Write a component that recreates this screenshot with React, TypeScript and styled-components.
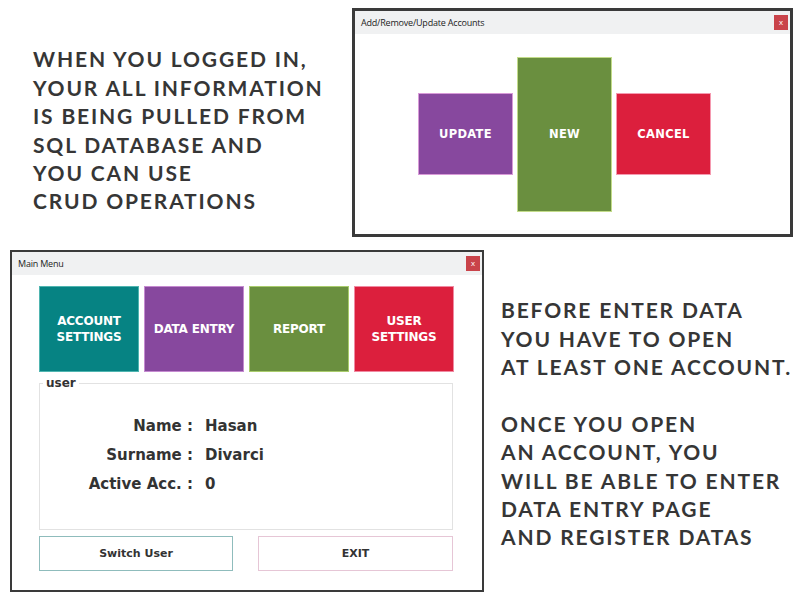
import * as React from 'react'
import styled, { createGlobalStyle } from 'styled-components'

const GlobalStyle = createGlobalStyle`
  html, body {
    margin: 0;
    padding: 0;
    background: #ffffff;
  }
  body {
    font-family: 'Liberation Sans', Arial, sans-serif;
  }
`

const tileFont = `'DejaVu Sans', Verdana, sans-serif`

const App: React.FC = () => {
  return (
    <Page>
      <GlobalStyle />
      <TopRow>
        <Blurb $shift={16}>
          WHEN YOU LOGGED IN,
          <br />
          YOUR ALL INFORMATION
          <br />
          IS BEING PULLED FROM
          <br />
          SQL DATABASE AND
          <br />
          YOU CAN USE
          <br />
          CRUD OPERATIONS
        </Blurb>
        <Window $w={441} $h={229} $border={3}>
          <TitleBar>
            <Title>Add/Remove/Update Accounts</Title>
            <CloseBtn>x</CloseBtn>
          </TitleBar>
          <AccountBody>
            <BigTile $bg="#87489e" $edge="#d89ad8" $h={82}>
              UPDATE
            </BigTile>
            <BigTile $bg="#6a8f3f" $edge="#c3dc8a" $h={155}>
              NEW
            </BigTile>
            <BigTile $bg="#dc1f3d" $edge="#f59ab0" $h={82}>
              CANCEL
            </BigTile>
          </AccountBody>
        </Window>
      </TopRow>
      <BottomRow>
        <Window $w={474} $h={342} $border={2}>
          <TitleBar>
            <Title>Main Menu</Title>
            <CloseBtn>x</CloseBtn>
          </TitleBar>
          <MenuBody>
            <TileRow>
              <MenuTile $bg="#068383" $edge="#4fb5b0">
                ACCOUNT
                <br />
                SETTINGS
              </MenuTile>
              <MenuTile $bg="#87489e" $edge="#c58ad0">DATA ENTRY</MenuTile>
              <MenuTile $bg="#6a8f3f" $edge="#a9cc6c">REPORT</MenuTile>
              <MenuTile $bg="#dc1f3d" $edge="#f08aa2">
                USER
                <br />
                SETTINGS
              </MenuTile>
            </TileRow>
            <UserBox>
              <legend>user</legend>
              <InfoGrid>
                <Label>Name :</Label>
                <Value>Hasan</Value>
                <Label>Surname :</Label>
                <Value>Divarci</Value>
                <Label>Active Acc. :</Label>
                <Value>0</Value>
              </InfoGrid>
            </UserBox>
            <ActionRow>
              <ActionButton $edge="#8fbcbc">Switch User</ActionButton>
              <ActionButton $edge="#e6c6d6">EXIT</ActionButton>
            </ActionRow>
          </MenuBody>
        </Window>
        <Blurb $shift={6}>
          BEFORE ENTER DATA
          <br />
          YOU HAVE TO OPEN
          <br />
          AT LEAST ONE ACCOUNT.
          <br />
          <br />
          ONCE YOU OPEN
          <br />
          AN ACCOUNT, YOU
          <br />
          WILL BE ABLE TO ENTER
          <br />
          DATA ENTRY PAGE
          <br />
          AND REGISTER DATAS
        </Blurb>
      </BottomRow>
    </Page>
  )
}

const Page = styled.div`
  width: 800px;
  height: 600px;
  overflow: hidden;
  display: flex;
  flex-direction: column;
`

const TopRow = styled.div`
  display: flex;
  align-items: center;
  justify-content: space-between;
  padding: 8px 7px 0 33px;
`

const BottomRow = styled.div`
  display: flex;
  align-items: center;
  gap: 17px;
  padding: 13px 0 0 10px;
`

const Blurb = styled.div<{ $shift: number }>`
  margin-top: ${(p) => p.$shift}px;
  font-family: 'Lato', 'Liberation Sans', sans-serif;
  font-weight: 700;
  font-size: 21px;
  line-height: 28.4px;
  letter-spacing: 1.85px;
  color: #363636;
  white-space: nowrap;
`

const Window = styled.div<{ $w: number; $h: number; $border: number }>`
  box-sizing: border-box;
  width: ${(p) => p.$w}px;
  height: ${(p) => p.$h}px;
  border: ${(p) => p.$border}px solid #3a3a3a;
  background: #ffffff;
  display: flex;
  flex-direction: column;
`

const TitleBar = styled.div`
  height: 23px;
  flex: none;
  background: #f0f1f2;
  display: flex;
  align-items: center;
  justify-content: space-between;
  padding: 0 2px 0 6px;
`

const Title = styled.span`
  font-family: 'Open Sans', 'Liberation Sans', sans-serif;
  font-size: 9px;
  letter-spacing: -0.2px;
  color: #222;
`

const CloseBtn = styled.span`
  width: 14px;
  height: 15px;
  background: #c9434a;
  color: #fff;
  font-family: 'Liberation Sans', sans-serif;
  font-size: 8px;
  display: flex;
  align-items: center;
  justify-content: center;
`

const AccountBody = styled.div`
  flex: 1;
  display: flex;
  align-items: center;
  gap: 4px;
  padding: 0 0 0 63px;
`

const BigTile = styled.div<{ $bg: string; $edge: string; $h: number }>`
  box-sizing: border-box;
  width: 95px;
  height: ${(p) => p.$h}px;
  background: ${(p) => p.$bg};
  border: 1.5px solid ${(p) => p.$edge};
  color: #fff;
  font-family: ${tileFont};
  font-weight: 700;
  font-size: 11.5px;
  letter-spacing: 0.3px;
  display: flex;
  align-items: center;
  justify-content: center;
`

const MenuBody = styled.div`
  flex: 1;
  display: flex;
  flex-direction: column;
  padding: 11px 29px 0 27px;
`

const TileRow = styled.div`
  display: grid;
  grid-template-columns: repeat(4, 100px);
  gap: 5px;
`

const MenuTile = styled.div<{ $bg: string; $edge: string }>`
  box-sizing: border-box;
  height: 86px;
  background: ${(p) => p.$bg};
  border: 1.5px solid ${(p) => p.$edge};
  color: #fff;
  font-family: ${tileFont};
  font-weight: 700;
  font-size: 12px;
  line-height: 16.5px;
  letter-spacing: -0.2px;
  text-align: center;
  display: flex;
  align-items: center;
  justify-content: center;
`

const UserBox = styled.fieldset`
  box-sizing: border-box;
  margin: 4px 0 0 0;
  padding: 0;
  height: 154px;
  border: 1px solid #e2e2e2;
  border-radius: 0;

  legend {
    margin-left: 3px;
    padding: 0 3px;
    font-family: ${tileFont};
    font-weight: 700;
    font-size: 12px;
    color: #333;
    line-height: 14px;
  }
`

const InfoGrid = styled.div`
  display: grid;
  grid-template-columns: 153px auto;
  column-gap: 12px;
  row-gap: 8px;
  padding-top: 26px;
  align-items: center;
`

const Label = styled.span`
  text-align: right;
  font-family: ${tileFont};
  font-weight: 700;
  font-size: 15px;
  line-height: 21px;
  color: #333;
`

const Value = styled.span`
  font-family: ${tileFont};
  font-weight: 700;
  font-size: 15px;
  line-height: 21px;
  color: #333;
`

const ActionRow = styled.div`
  display: grid;
  grid-template-columns: 194px 195px;
  justify-content: space-between;
  margin-top: 6px;
`

const ActionButton = styled.div<{ $edge: string }>`
  box-sizing: border-box;
  height: 35px;
  border: 1.5px solid ${(p) => p.$edge};
  background: #fff;
  font-family: ${tileFont};
  font-weight: 700;
  font-size: 11px;
  color: #333;
  display: flex;
  align-items: center;
  justify-content: center;
`

export default App
